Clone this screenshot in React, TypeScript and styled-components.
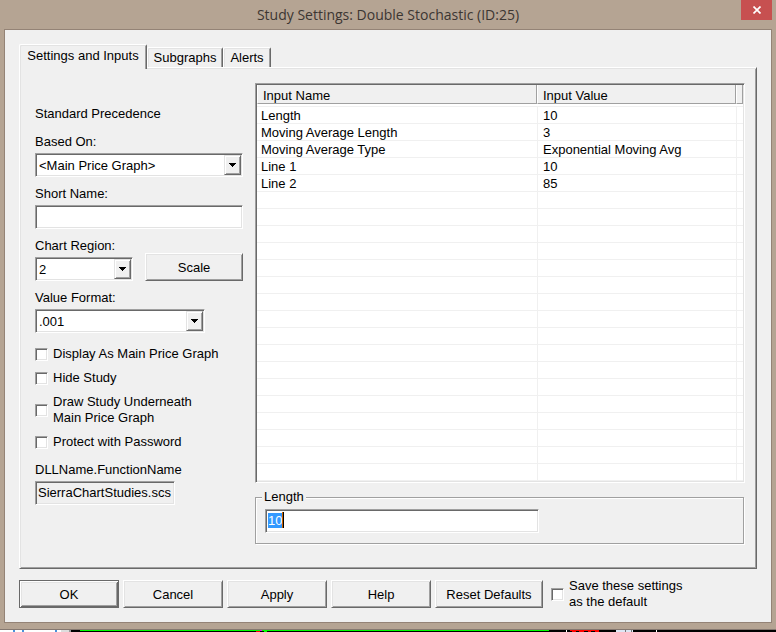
import React, { useEffect, useId, useRef } from "react";
import styled, { createGlobalStyle, css } from "styled-components";

const face = "#f0f0f0";
const light = "#e3e3e3";
const mid = "#a0a0a0";
const dark = "#696969";
const frame = "#b5a493";
const frameEdge = "#948376";

const GlobalStyle = createGlobalStyle`
  *, *::before, *::after { box-sizing: border-box; }
  body {
    margin: 0;
    background: ${frame};
    color: #000;
    font: 13px/17px "Liberation Sans", Arial, sans-serif;
  }
  button, input, select { font: inherit; color: inherit; border-radius: 0; outline: none; }
`;

const sunken = css`
  border: 1px solid;
  border-color: ${mid} #fff #fff ${mid};
  box-shadow: inset 1px 1px 0 ${dark}, inset -1px -1px 0 ${light};
`;

const raised = css`
  border: 1px solid;
  border-color: #fff ${dark} ${dark} #fff;
  box-shadow: inset 1px 1px 0 ${light}, inset -1px -1px 0 ${mid};
`;

const Window = styled.main`
  background: ${frame};
`;

const TitleBar = styled.header`
  display: grid;
  grid-template-columns: 1fr auto 1fr;
  height: 29px;
  padding: 0 4px;
`;

const Title = styled.h1`
  grid-column: 2;
  margin: 0;
  font: 400 14px/29px "Open Sans", "Noto Sans", sans-serif;
  color: #3c3632;
  white-space: nowrap;
`;

const CloseButton = styled.button`
  justify-self: end;
  display: flex;
  align-items: center;
  justify-content: center;
  width: 31px;
  height: 20px;
  padding: 0;
  border: 0;
  background: #c75050;
`;

const Client = styled.div`
  margin: 0 4px;
  padding: 14px 14px 12px;
  border: 1px solid ${frameEdge};
  background: ${face};
`;

const WindowEdge = styled.div`
  height: 7px;
  border-bottom: 1px solid #857870;
`;

const Tabs = styled.div`
  display: flex;
  align-items: flex-end;
  height: 23px;
`;

const Tab = styled.button<{ $width: number }>`
  width: ${(p) => p.$width}px;
  height: 20px;
  padding: 0;
  border: 1px solid;
  border-color: #fff ${dark} transparent #fff;
  border-bottom: 0;
  border-radius: 2px 2px 0 0;
  background: ${face};
  box-shadow: inset 1px 1px 0 ${light}, inset -1px 0 0 ${mid};
  line-height: 16px;
  white-space: nowrap;

  &[aria-selected="true"] {
    position: relative;
    z-index: 1;
    align-self: flex-start;
    flex: none;
    height: 25px;
    padding-bottom: 2px;
  }
`;

const Panel = styled.section`
  ${raised}
  display: flex;
  gap: 12px;
  padding: 15px 11px 24px 15px;
`;

const Side = styled.div`
  flex: none;
  width: 208px;
  padding-top: 22px;
`;

const Caption = styled.p`
  margin: 0 0 11px;
`;

const Field = styled.div`
  display: flex;
  flex-direction: column;
  gap: 3px;
  margin-bottom: 8px;
`;

const FieldRow = styled.div`
  display: flex;
  align-items: flex-end;
  justify-content: space-between;
  height: 24px;
`;

const TextBox = styled.input<{ $width?: number }>`
  ${sunken}
  width: ${(p) => (p.$width ? `${p.$width}px` : "100%")};
  max-width: 100%;
  height: 24px;
  padding: 0 2px 2px;
  background: #fff;

  &:read-only { background: ${face}; }
  &::selection { background: #3399ff; color: #fff; }
`;

const SelectBox = styled.span<{ $width: number }>`
  position: relative;
  display: block;
  width: ${(p) => p.$width}px;
`;

const Select = styled.select`
  ${sunken}
  appearance: none;
  display: block;
  width: 100%;
  height: 24px;
  padding: 0 18px 0 3px;
  background: #fff;
`;

const Arrow = styled.span`
  ${raised}
  position: absolute;
  top: 2px;
  right: 2px;
  bottom: 2px;
  display: flex;
  align-items: center;
  justify-content: center;
  width: 17px;
  border-color: ${light} ${dark} ${dark} ${light};
  box-shadow: inset 1px 1px 0 #fff, inset -1px -1px 0 ${mid};
  background: ${face};
  pointer-events: none;
`;

const PushButton = styled.button<{ $width: number; $default?: boolean }>`
  ${raised}
  width: ${(p) => p.$width}px;
  height: 28px;
  padding: 0;
  background: ${face};
  white-space: nowrap;
  ${(p) =>
    p.$default &&
    css`
      border-color: ${dark};
      box-shadow: inset 1px 1px 0 #fff, inset -1px -1px 0 ${dark},
        inset 2px 2px 0 ${light}, inset -2px -2px 0 ${mid};
    `}
`;

const Checks = styled.div`
  display: flex;
  flex-direction: column;
  gap: 8px;
  margin: 13px 0 11px;
`;

const CheckLabel = styled.label`
  display: flex;
  align-items: center;
  gap: 5px;
  line-height: 16px;
  white-space: pre-line;
`;

const CheckBox = styled.input`
  ${sunken}
  appearance: none;
  flex: none;
  width: 13px;
  height: 13px;
  margin: 0;
  background: #fff;
`;

const Content = styled.div`
  flex: 1;
  min-width: 0;
`;

const ListBox = styled.div`
  ${sunken}
  padding: 1px;
  margin-bottom: 6px;
  background: #fff;
`;

const Table = styled.table`
  width: 100%;
  table-layout: fixed;
  border-collapse: separate;
  border-spacing: 0;
  font-size: 13px;
`;

const NameCol = styled.col` width: 280px; `;
const EndCol = styled.col` width: 7px; `;

const HeadCell = styled.th`
  padding: 0 0 2px;
  font-weight: 400;
  text-align: left;
`;

const HeadFace = styled.div`
  height: 19px;
  padding: 2px 0 0 5px;
  border: 1px solid;
  border-color: #fff ${mid} ${mid} #fff;
  border-top: 0;
  background: ${face};
`;

const Cell = styled.td`
  height: 17px;
  padding: 1px 0 0 5px;
  border-top: 1px solid ${face};
  border-left: 1px solid ${face};
  line-height: 15px;

  &:first-child { padding-left: 4px; border-left: 0; }
  tr:last-child > & { height: 18px; border-bottom: 1px solid ${face}; }
`;

const Group = styled.fieldset`
  min-width: 0;
  margin: 0 1px 0 0;
  padding: 4px 9px 10px;
  border: 1px solid ${mid};
  box-shadow: 1px 1px 0 #fff, inset 1px 1px 0 #fff;
`;

const Legend = styled.legend`
  margin-left: -3px;
  padding: 0 2px;
  background: ${face};
  line-height: 16px;
`;

const EditLine = styled.div`
  position: relative;
`;

const Caret = styled.span`
  position: absolute;
  top: 3px;
  left: 17px;
  width: 2px;
  height: 16px;
  border-left: 1px solid #cc6600;
  background: #000;
`;

const Footer = styled.footer`
  display: flex;
  align-items: center;
  gap: 4px;
  margin-top: 9px;
`;

const FooterCheck = styled.div`
  margin-left: 4px;
`;

const Backdrop = styled.svg`
  display: block;
  width: 100%;
  height: 2px;
`;

const DropDown = ({ label, value, width, children }: {
  label: string;
  value: string;
  width: number;
  children?: React.ReactNode;
}) => {
  const id = useId();
  return (
    <Field>
      <label htmlFor={id}>{label}</label>
      <FieldRow>
        <SelectBox $width={width}>
          <Select id={id} defaultValue={value}>
            <option>{value}</option>
          </Select>
          <Arrow aria-hidden>
            <svg width="7" height="4" shapeRendering="crispEdges">
              <path d="M0 0h7v1h-1v1h-1v1h-1v1h-1v-1h-1v-1h-1v-1h-1z" />
            </svg>
          </Arrow>
        </SelectBox>
        {children}
      </FieldRow>
    </Field>
  );
};

const TextField = ({ label, value = "", width, readOnly }: {
  label: string;
  value?: string;
  width?: number;
  readOnly?: boolean;
}) => {
  const id = useId();
  return (
    <Field>
      <label htmlFor={id}>{label}</label>
      <TextBox id={id} $width={width} defaultValue={value} readOnly={readOnly} />
    </Field>
  );
};

const Check = ({ label }: { label: string }) => (
  <CheckLabel>
    <CheckBox type="checkbox" />
    <span>{label}</span>
  </CheckLabel>
);

const inputs = [
  ["Length", "10"],
  ["Moving Average Length", "3"],
  ["Moving Average Type", "Exponential Moving Avg"],
  ["Line 1", "10"],
  ["Line 2", "85"],
];
const rowCount = 22;
const rows = Array.from({ length: rowCount }, (_, i) => inputs[i] ?? ["", ""]);

const InputTable = () => (
  <ListBox>
    <Table>
      <colgroup>
        <NameCol />
        <col />
        <EndCol />
      </colgroup>
      <thead>
        <tr>
          <HeadCell><HeadFace>Input Name</HeadFace></HeadCell>
          <HeadCell><HeadFace>Input Value</HeadFace></HeadCell>
          <HeadCell><HeadFace /></HeadCell>
        </tr>
      </thead>
      <tbody>
        {rows.map(([name, value], i) => (
          <tr key={i}>
            <Cell>{name}</Cell>
            <Cell>{value}</Cell>
            <Cell />
          </tr>
        ))}
      </tbody>
    </Table>
  </ListBox>
);

const ValueEditor = () => {
  const ref = useRef<HTMLInputElement>(null);
  useEffect(() => {
    ref.current?.focus();
    ref.current?.select();
  }, []);
  return (
    <Group>
      <Legend>Length</Legend>
      <EditLine>
        <TextBox ref={ref} $width={274} defaultValue="10" aria-label="Length" />
        <Caret aria-hidden />
      </EditLine>
    </Group>
  );
};

export default function App() {
  return (
    <>
      <GlobalStyle />
      <Window>
        <TitleBar>
          <Title>Study Settings: Double Stochastic (ID:25)</Title>
          <CloseButton aria-label="Close">
            <svg width="8" height="8" viewBox="0 0 8 8" stroke="#fff" strokeWidth="1.7">
              <path d="M0.5 0.5l7 7M7.5 0.5l-7 7" />
            </svg>
          </CloseButton>
        </TitleBar>
        <Client>
          <Tabs role="tablist">
            <Tab role="tab" aria-selected="true" $width={128}>Settings and Inputs</Tab>
            <Tab role="tab" aria-selected="false" $width={76}>Subgraphs</Tab>
            <Tab role="tab" aria-selected="false" $width={48}>Alerts</Tab>
          </Tabs>
          <Panel role="tabpanel">
            <Side>
              <Caption>Standard Precedence</Caption>
              <DropDown label="Based On:" value="<Main Price Graph>" width={208} />
              <TextField label="Short Name:" />
              <DropDown label="Chart Region:" value="2" width={98}>
                <PushButton $width={98}>Scale</PushButton>
              </DropDown>
              <DropDown label="Value Format:" value=".001" width={170} />
              <Checks>
                <Check label="Display As Main Price Graph" />
                <Check label="Hide Study" />
                <Check label={"Draw Study Underneath\nMain Price Graph"} />
                <Check label="Protect with Password" />
              </Checks>
              <TextField
                label="DLLName.FunctionName"
                value="SierraChartStudies.scs"
                width={140}
                readOnly
              />
            </Side>
            <Content>
              <InputTable />
              <ValueEditor />
            </Content>
          </Panel>
          <Footer>
            <PushButton $width={100} $default>OK</PushButton>
            <PushButton $width={100}>Cancel</PushButton>
            <PushButton $width={100}>Apply</PushButton>
            <PushButton $width={100}>Help</PushButton>
            <PushButton $width={108}>Reset Defaults</PushButton>
            <FooterCheck>
              <Check label={"Save these settings\nas the default"} />
            </FooterCheck>
          </Footer>
        </Client>
        <WindowEdge />
      </Window>
      <Backdrop viewBox="0 0 776 2" preserveAspectRatio="none" shapeRendering="crispEdges" aria-hidden>
        <path fill="#000" d="M0 0h776v2H0z" />
        <path fill="#fff" d="M0 0h61v2H0zM566 0h1v2h-1zM656 0h1v2h-1z" />
        <path fill="#4a90d9" d="M13 0h2v2h-2zM22 0h2v2h-2zM55 0h2v2h-2z" />
        <path fill="#ddd" d="M61 0h8v2h-8z" />
        <path fill="#999" d="M69 0h2v2h-2z" />
        <path fill="#0f0" d="M80 0h469v1H80zM264 1h3v1h-3z" />
        <path fill="#f0f" d="M260 0h2v1h-2z" />
        <path fill="#f00" d="M570 0h29v1h-29zM572 1h4v1h-4zM579 1h5v1h-5zM588 1h3v1h-3zM595 1h4v1h-4zM256 1h4v1h-4z" />
        <path fill="#dde6f4" d="M616 0h17v2h-17z" />
        <path fill="#777" d="M625 0h1v2h-1zM631 0h1v2h-1z" />
      </Backdrop>
    </>
  );
}
